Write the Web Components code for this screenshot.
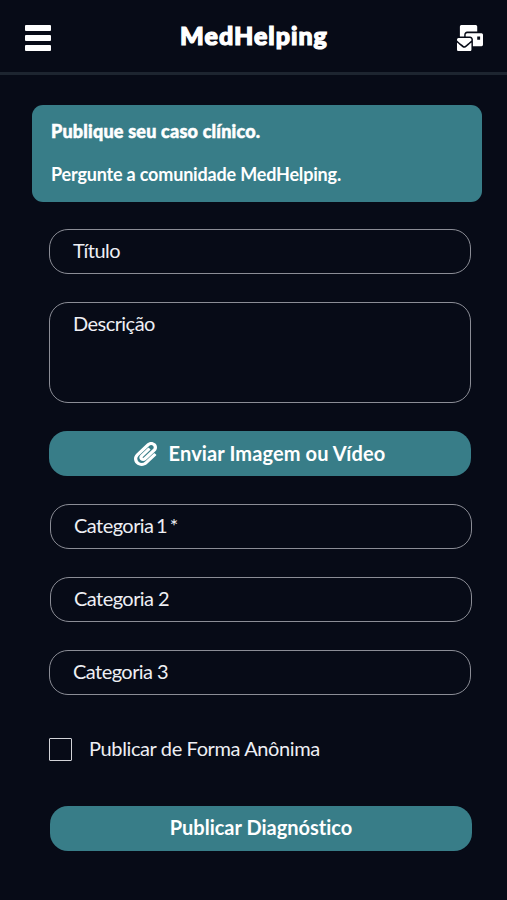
<!DOCTYPE html>
<html lang="pt-BR">
<head>
<meta charset="UTF-8">
<meta name="viewport" content="width=device-width, initial-scale=1.0">
<title>MedHelping</title>
<style>
body {
    margin: 0;
    min-height: 900px;
    background-color: #070b17;
    color: #fff;
    font-family: Lato, "Open Sans", sans-serif;
    font-variant-ligatures: none;
}
</style>
</head>
<body>
<post-page></post-page>

<script>
class AppBar extends HTMLElement {
    constructor(){
        super();
        this.shadowDOM = this.attachShadow({mode: 'open'});
    }

    connectedCallback(){
        this.render();
    }

    render(){
        this.shadowDOM.innerHTML = `
        <style>
        :host {
            display: flex;
            align-items: center;
            justify-content: space-between;
            box-sizing: border-box;
            height: 75px;
            padding: 1px 24px 0 25px;
            border-bottom: 3px solid #1d2530;
        }

        .menu {
            display: flex;
            flex-direction: column;
            gap: 4px;
            padding: 3px 0 0;
        }

        .menu > span {
            width: 26px;
            height: 6px;
            border-radius: 1px;
            background-color: #fff;
        }

        h1 {
            margin: 0;
            padding-bottom: 3px;
            font-size: 25px;
            font-weight: 900;
            line-height: 30px;
            letter-spacing: 1px;
            -webkit-text-stroke: 1.2px #fff;
        }

        svg {
            width: 26px;
            height: 26px;
            padding-top: 3px;
            fill: #fff;
        }
        </style>

        <div class="menu"><span></span><span></span><span></span></div>
        <h1><slot></slot></h1>
        <svg viewBox="0 0 576 512" preserveAspectRatio="none"><path d="M160 448c-25.6 0-51.2-22.4-64-32-64-44.8-83.2-60.8-96-70.4V480c0 17.67 14.33 32 32 32h256c17.67 0 32-14.33 32-32V345.6c-12.8 9.6-32 25.6-96 70.4-12.8 9.6-38.4 32-64 32zm128-192H32c-17.67 0-32 14.33-32 32v16c25.6 19.2 22.4 19.2 115.2 86.4 9.6 6.4 28.8 25.6 44.8 25.6s35.2-19.2 44.8-22.4c92.8-67.2 89.6-67.2 115.2-86.4V288c0-17.67-14.33-32-32-32zm256-96H224c-17.67 0-32 14.33-32 32v32h96c33.21 0 60.59 25.42 63.71 57.82l.29-.22V416h192c17.67 0 32-14.33 32-32V192c0-17.67-14.33-32-32-32zm-32 128h-64v-64h64v64zm-352-96c0-35.29 28.71-64 64-64h224V32c0-17.67-14.33-32-32-32H96C78.33 0 64 14.33 64 32v192h96v-32z"/></svg>
        `;
    }
}

class InfoBanner extends HTMLElement {
    constructor(){
        super();
        this.shadowDOM = this.attachShadow({mode: 'open'});
    }

    connectedCallback(){
        this.render();
    }

    render(){
        this.shadowDOM.innerHTML = `
        <style>
        :host {
            display: flex;
            flex-direction: column;
            gap: 19px;
            box-sizing: border-box;
            height: 97px;
            padding: 14px 19px;
            border-radius: 11px;
            background-color: #387d88;
            font-size: 18px;
            line-height: 24px;
        }

        .title {
            font-weight: 900;
            letter-spacing: 0.2px;
            -webkit-text-stroke: 0.5px #fff;
        }

        .text {
            font-weight: 700;
            letter-spacing: -0.18px;
        }
        </style>

        <div class="title"><slot name="title"></slot></div>
        <div class="text"><slot></slot></div>
        `;
    }
}

class FormField extends HTMLElement {
    constructor(){
        super();
        this.shadowDOM = this.attachShadow({mode: 'open'});
    }

    connectedCallback(){
        this.render();
    }

    render(){
        this.shadowDOM.innerHTML = `
        <style>
        :host {
            display: block;
            box-sizing: border-box;
            height: 45px;
            padding: 7px 23px;
            border: 1px solid #8b8d96;
            border-radius: 19px;
            color: #eeeff4;
            font-size: 20px;
            line-height: 26px;
            letter-spacing: -0.55px;
        }

        :host([multiline]) {
            height: 101px;
        }

        :host([required]) {
            word-spacing: -2px;
        }
        </style>

        <slot></slot>
        `;
    }
}

class ActionButton extends HTMLElement {
    constructor(){
        super();
        this.shadowDOM = this.attachShadow({mode: 'open'});
    }

    connectedCallback(){
        this.render();
    }

    get icon(){
        if (this.getAttribute('icon') !== 'clip') return '';
        return `<svg viewBox="0 0 448 512" preserveAspectRatio="none"><path d="M43.246 466.142c-58.43-60.289-57.341-157.511 1.386-217.581L254.392 34c44.316-45.332 116.351-45.336 160.671 0 43.89 44.894 43.943 117.329 0 162.276L232.214 383.128c-29.855 30.537-78.633 30.111-107.982-.998-28.275-29.97-27.368-77.473 1.452-106.953l143.743-146.835c6.182-6.314 16.312-6.422 22.626-.241l22.861 22.379c6.315 6.182 6.422 16.312.241 22.626L171.427 319.927c-4.932 5.045-5.236 13.428-.648 18.292 4.372 4.634 11.245 4.711 15.688.165l182.849-186.851c19.613-20.062 19.613-52.725-.011-72.798-19.189-19.627-49.957-19.637-69.154 0L90.39 293.295c-34.763 35.56-35.299 93.12-1.191 128.313 34.01 35.093 88.985 35.137 123.058.286l172.06-175.999c6.177-6.319 16.307-6.433 22.626-.256l22.877 22.364c6.319 6.177 6.434 16.307.256 22.626l-172.06 175.998c-59.576 60.938-155.943 60.216-214.77-.485z"/></svg>`;
    }

    render(){
        this.shadowDOM.innerHTML = `
        <style>
        :host {
            display: flex;
            align-items: center;
            justify-content: center;
            gap: 12px;
            box-sizing: border-box;
            height: 45px;
            padding-bottom: 3px;
            border-radius: 18px;
            background-color: #387d88;
            font-size: 20px;
            font-weight: 700;
            line-height: 26px;
            cursor: pointer;
        }

        :host([icon]) {
            padding: 0 1px 1px 0;
            letter-spacing: 0.12px;
        }

        svg {
            width: 23px;
            height: 24px;
            padding-top: 2px;
            fill: #fff;
        }
        </style>

        ${this.icon}
        <span><slot></slot></span>
        `;
    }
}

class CheckOption extends HTMLElement {
    constructor(){
        super();
        this.shadowDOM = this.attachShadow({mode: 'open'});
    }

    connectedCallback(){
        this.render();
    }

    render(){
        this.shadowDOM.innerHTML = `
        <style>
        :host {
            display: flex;
            align-items: center;
            gap: 17px;
            height: 26px;
            color: #eeeff4;
            font-size: 20px;
            line-height: 26px;
            letter-spacing: -0.38px;
        }

        .box {
            box-sizing: border-box;
            width: 23px;
            height: 23px;
            border: 1px solid #d2d3d8;
            border-radius: 1px;
        }

        span {
            padding-bottom: 2px;
        }
        </style>

        <div class="box"></div>
        <span><slot></slot></span>
        `;
    }
}

class PostPage extends HTMLElement {
    constructor(){
        super();
        this.shadowDOM = this.attachShadow({mode: 'open'});
    }

    connectedCallback(){
        this.render();
    }

    render(){
        this.shadowDOM.innerHTML = `
        <style>
        :host {
            display: block;
        }

        info-banner {
            margin: 30px 25px 0 32px;
        }

        form {
            display: flex;
            flex-direction: column;
            gap: 28px;
            margin: 27px 36px 0 49px;
        }

        .shifted {
            margin: 0 -1px 0 1px;
        }

        check-option {
            margin: 13px 0 16px;
        }
        </style>

        <app-bar>MedHelping</app-bar>
        <info-banner>
            <span slot="title">Publique seu caso clínico.</span>
            Pergunte a comunidade MedHelping.
        </info-banner>
        <form>
            <form-field>Título</form-field>
            <form-field multiline>Descrição</form-field>
            <action-button icon="clip">Enviar Imagem ou Vídeo</action-button>
            <form-field class="shifted" required>Categoria 1 *</form-field>
            <form-field class="shifted">Categoria 2</form-field>
            <form-field>Categoria 3</form-field>
            <check-option>Publicar de Forma Anônima</check-option>
            <action-button class="shifted">Publicar Diagnóstico</action-button>
        </form>
        `;
    }
}

customElements.define('app-bar', AppBar);
customElements.define('info-banner', InfoBanner);
customElements.define('form-field', FormField);
customElements.define('action-button', ActionButton);
customElements.define('check-option', CheckOption);
customElements.define('post-page', PostPage);
</script>
</body>
</html>
